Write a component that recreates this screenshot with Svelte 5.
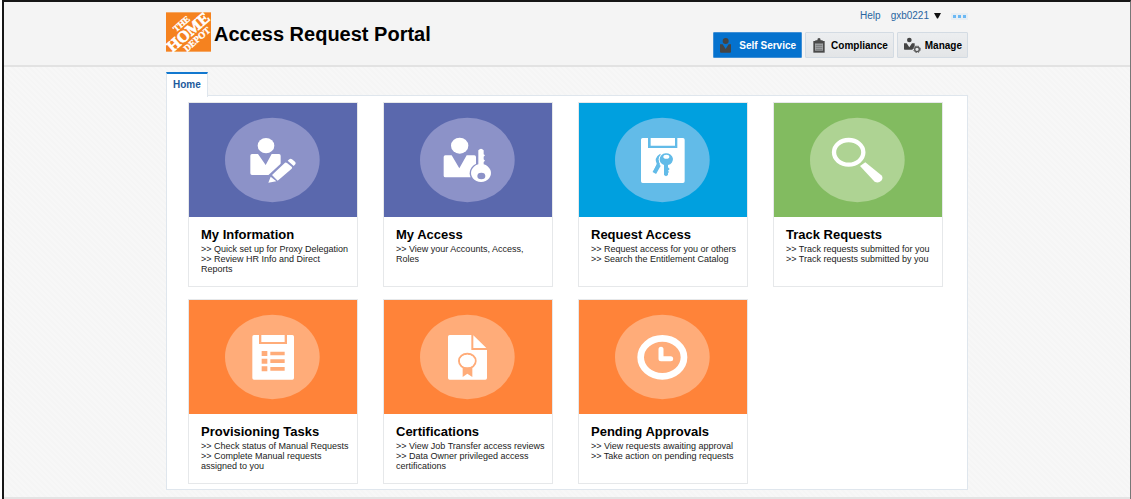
<script>
  const tiles = [
    { icon: 'edit', tone: 'indigo', title: 'My Information', lines: ['Quick set up for Proxy Delegation', 'Review HR Info and Direct Reports'] },
    { icon: 'access', tone: 'indigo', title: 'My Access', lines: ['View your Accounts, Access, Roles'] },
    { icon: 'request', tone: 'blue', title: 'Request Access', lines: ['Request access for you or others', 'Search the Entitlement Catalog'] },
    { icon: 'track', tone: 'green', title: 'Track Requests', lines: ['Track requests submitted for you', 'Track requests submitted by you'] },
    { icon: 'tasks', tone: 'orange', title: 'Provisioning Tasks', lines: ['Check status of Manual Requests', 'Complete Manual requests assigned to you'] },
    { icon: 'cert', tone: 'orange', title: 'Certifications', lines: ['View Job Transfer access reviews', 'Data Owner privileged access certifications'] },
    { icon: 'clock', tone: 'orange', title: 'Pending Approvals', lines: ['View requests awaiting approval', 'Take action on pending requests'] }
  ];
</script>

<div class="page">
  <header>
    <div class="wrap bar">
      <div class="brand">
        <svg class="logo" viewBox="0 0 135 118" role="img" aria-label="The Home Depot">
          <rect width="135" height="118" fill="#f5821f" />
          <g transform="translate(67 60) rotate(-41)" fill="#fff" stroke="#fff" text-anchor="middle" font-family="Liberation Serif, serif" font-weight="700">
            <text x="1" y="-24" font-size="27" stroke-width="1">THE</text>
            <text x="0" y="15" font-size="48" stroke-width="2">HOME</text>
            <text x="6" y="42" font-size="28" stroke-width="1">DEPOT</text>
          </g>
        </svg>
        <h1>Access Request Portal</h1>
      </div>
      <div class="side">
        <div class="user">
          <a href="#help">Help</a>
          <button class="account" type="button">gxb0221
            <svg width="7" height="6" viewBox="0 0 7 6" aria-hidden="true"><path d="M0 0h7L4 5.500h-1z" fill="#111" /></svg>
          </button>
          <button class="more" type="button" aria-label="More">
            <svg width="13" height="3" viewBox="0 0 13 3" aria-hidden="true"><path d="M0 0h3v3H0zM5 0h3v3H5zM10 0h3v3h-3z" fill="#6ab8f4" /></svg>
          </button>
        </div>
        <nav>
          <button class="mode active" type="button">
            <svg width="16" height="16" viewBox="0 0 48 48" fill="#444" aria-hidden="true"><ellipse cx="20" cy="12" rx="9" ry="9" /><path d="M3 22h8l9 14 9-14h7v22q0 3-3 3H6q-3 0-3-3z" /></svg>
            Self Service
          </button>
          <button class="mode" type="button">
            <svg width="16" height="16" viewBox="0 0 48 48" aria-hidden="true"><path d="M7 12h34v35H7z" fill="#4a4a4a" /><path d="M12 19h24v22H12z" fill="#a3a5a7" /><path d="M13 19V10h6q0-7 5-7t5 7h6v9z" fill="#4a4a4a" /><path d="M14 25h20M14 31h20M14 37h20" stroke="#606264" stroke-width="2" /></svg>
            Compliance
          </button>
          <button class="mode" type="button">
            <svg width="18" height="16" viewBox="0 0 54 48" aria-hidden="true"><ellipse cx="19" cy="9" rx="7" ry="7" fill="#444" /><path d="M3 19h8l8 12 8-12h8v9l-7 10H5q-2 0-2-2z" fill="#444" /><circle cx="42" cy="37" r="7" fill="none" stroke="#555" stroke-width="4" /><circle cx="42" cy="37" r="10" fill="none" stroke="#555" stroke-width="3" stroke-dasharray="4 4" /></svg>
            Manage
          </button>
        </nav>
      </div>
    </div>
  </header>

  <main class="wrap">
    <a class="tab" href="#home">Home</a>
    <div class="panel">
      {#each tiles as tile}
        <a class="tile {tile.tone}" href="#{tile.icon}">
          <svg class="hero" viewBox="27 24 504 342" aria-hidden="true">
            <ellipse class="disc" cx="277" cy="195" rx="142" ry="127" />
            {#if tile.icon === 'edit'}
              <ellipse cx="258" cy="152" rx="25" ry="23" />
              <path d="M216 177h18l23 33 18-33h22q5 0 5 5v58h-86q-5 0-5-5v-53q0-5 5-5z" />
              <path class="gap" d="M259 269l9-31 52-48 32 24-10 16-58 42z" />
              <path d="M265 263l7-18 17 14zM276 240l39-37q3-2 6 1l14 11q3 3 0 6l-42 36zM323 197l5-4q4-3 8 0l9 7q4 4 1 8l-5 5z" />
            {:else if tile.icon === 'access'}
              <ellipse cx="254" cy="152" rx="26" ry="24" />
              <path d="M211 181h19l23 39 22-39h23q5 0 5 5v61h-92q-5 0-5-5v-56q0-5 5-5z" />
              <ellipse class="gap" cx="319" cy="235" rx="35" ry="32" />
              <path class="gap" d="M304 174h28v42h-28z" />
              <path fill-rule="evenodd" d="M310 166q8-9 16 0v12l4 3-4 4v8l4 4-4 4v7a30 27 0 1 1-16 0zM307 243a12 10 0 1 0 24 0 12 10 0 1 0-24 0z" />
            {:else if tile.icon === 'request'}
              <path d="M218 129h16v30h88v-30h17q5 0 5 5v125q0 5-5 5H218q-5 0-5-5V134q0-5 5-5zM242 129h73v23h-73z" />
              <path class="cut-line" d="M273 180q-17 10-8 27l-11 25" stroke-width="9" />
              <path class="cut-line" d="M267 209l-14 25" stroke-width="12" />
              <ellipse cx="289" cy="193" rx="23" ry="21" />
              <path class="white-line" d="M289 205v30" stroke-width="20" />
              <path class="cut" fill-rule="evenodd" d="M269 193a20 18 0 1 1 25 17v7l5 5-5 5 3 4-3 3v6l-6 4-6-4v-30a20 18 0 0 1-13-17zM280 185a9 6 0 1 0 18 0 9 6 0 1 0-18 0z" />
            {:else if tile.icon === 'track'}
              <ellipse class="white-line" cx="251" cy="172" rx="44" ry="37" stroke-width="13" />
              <path d="M285 213l16-11 48 39q7 8 0 16-9 9-20 3z" />
            {:else if tile.icon === 'tasks'}
              <path d="M222 129h15v27h84v-27h16q5 0 5 5v124q0 5-5 5H222q-5 0-5-5V134q0-5 5-5zM244 129h70v21h-70z" />
              <path class="cut" d="M245 177h17v15h-17zM271 179h43v11h-43zM245 200h17v15h-17zM271 202h43v11h-43zM245 223h17v15h-17zM271 225h43v11h-43z" />
            {:else if tile.icon === 'cert'}
              <path d="M224 129h65v45h47v84q0 5-5 5H224q-5 0-5-5V134q0-5 5-5zM295 130l39 38h-39z" />
              <ellipse class="cut-line" cx="277" cy="207" rx="25" ry="22" stroke-width="6" />
              <path class="cut" d="M263 224h29v31l-15-10-14 10z" />
              <ellipse cx="277" cy="207" rx="22" ry="19" />
            {:else}
              <ellipse class="white-line" cx="277" cy="196" rx="65" ry="57" stroke-width="20" />
              <path class="white-line" d="M273 172v28h29" stroke-width="15" stroke-linecap="round" stroke-linejoin="round" />
            {/if}
          </svg>
          <div class="copy">
            <h2>{tile.title}</h2>
            {#each tile.lines as line}
              <p>&gt;&gt; {line}</p>
            {/each}
          </div>
        </a>
      {/each}
    </div>
  </main>
  <footer></footer>
</div>

<style>
  :global(body) {
    background: #fff;
    font-family: "Liberation Sans", Arial, sans-serif;
  }
  * { box-sizing: border-box; }
  a { color: inherit; text-decoration: none; }
  button { font: inherit; cursor: pointer; }
  .page {
    margin-left: 2px;
    min-height: 100vh;
    border: solid #161616;
    border-width: 2px 1px 0 2px;
    border-right-color: #777;
    background: repeating-linear-gradient(45deg, #f7f7f7 0 2px, #f5f5f5 2px 4px);
  }
  .wrap { width: 100%; max-width: 802px; margin: 0 auto; }
  header {
    background: #f4f4f4;
    border-bottom: 2px solid #e2e2e2;
  }
  .bar { display: flex; justify-content: space-between; padding-top: 6px; height: 63px; }
  .brand { display: flex; align-items: flex-start; gap: 3px; padding-top: 4px; }
  .logo { width: 45px; height: 40px; overflow: visible; }
  h1 { margin: 10px 0 0; font-size: 20px; line-height: 24px; color: #000; }
  .side { display: flex; flex-direction: column; align-items: flex-end; gap: 8px; }
  .user { display: flex; align-items: center; gap: 10px; height: 16px; font-size: 10px; line-height: 16px; color: #2864a0; }
  .account { display: flex; align-items: center; gap: 5px; padding: 0; border: 0; background: none; color: inherit; }
  .more { display: flex; align-items: center; padding: 2px; border: 0; background: #e6edf3; }
  nav { display: flex; gap: 3px; }
  .mode {
    display: flex;
    align-items: center;
    gap: 4px;
    height: 26px;
    padding: 0 5px;
    border: 1px solid #d3dbe3;
    border-radius: 1px;
    background: linear-gradient(#eceef0, #e3e5e7);
    color: #000;
    font-size: 10px;
    font-weight: 700;
  }
  .mode.active { background: #0572ce; border-color: #3f8fd6; color: #fff; }

  main { padding: 5px 0 7px; }
  .tab {
    display: inline-block;
    position: relative;
    vertical-align: top;
    height: 25px;
    margin-bottom: -2px;
    padding: 0 6px;
    border: 1px solid #dfe6ed;
    border-top: 2px solid #1278cf;
    border-bottom: 0;
    background: #fff;
    color: #1c5a9c;
    font-size: 10px;
    font-weight: 700;
    line-height: 22px;
  }
  .panel {
    display: grid;
    grid-template-columns: repeat(auto-fill, 170px);
    gap: 12px 25px;
    padding: 6px 21px 5px;
    border: 1px solid #dfe6ed;
    background: #fff;
  }
  .tile { display: flex; flex-direction: column; min-height: 185px; border: 1px solid #e6e8ea; background: #fff; color: #000; }
  .hero { display: block; width: 100%; fill: #fff; background: var(--tone); }
  .disc, .cut, .gap { fill: var(--soft); }
  .cut-line { fill: none; stroke: var(--soft); }
  .white-line { fill: none; stroke: #fff; }
  .indigo { --tone: #5a68ad; --soft: #8c92c8; }
  .blue { --tone: #00a0df; --soft: #62bbe8; }
  .green { --tone: #82bb60; --soft: #aed393; }
  .orange { --tone: #ff8339; --soft: #ffac79; }
  .copy { padding: 9px 6px 8px 12px; }
  h2 { margin: 0 0 1px; font-size: 13px; line-height: 17px; }
  p { margin: 0; color: #222; font-size: 9px; line-height: 10px; }
  footer { height: 2px; background: #e4e4e4; }
</style>
